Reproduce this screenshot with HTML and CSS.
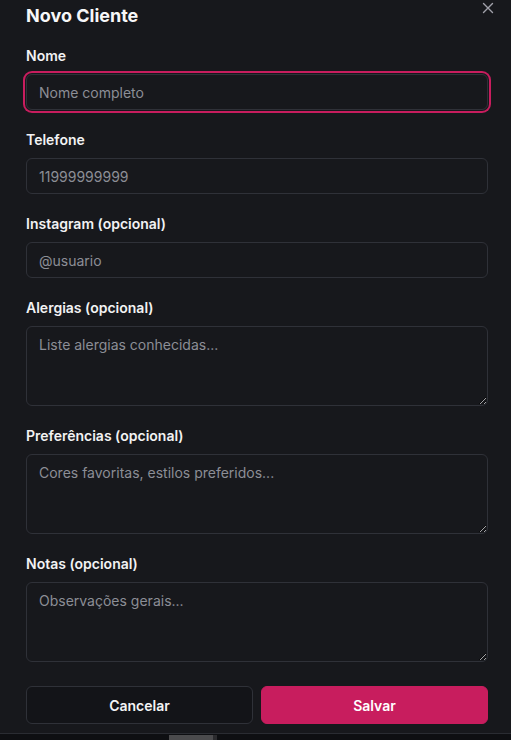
FILE: index.html
```html
<!DOCTYPE html>
<html lang="pt-BR">
<head>
<meta charset="utf-8">
<title>Novo Cliente</title>
<link rel="stylesheet" href="styles.css">
</head>
<body>
<div class="modal">
  <button class="close" aria-label="Fechar">
    <svg width="12" height="12" viewBox="0 0 12 12"><path d="M1.5 1.5 L10.5 10.5 M10.5 1.5 L1.5 10.5" stroke="currentColor" stroke-width="1.4" stroke-linecap="round"/></svg>
  </button>
  <h2 class="title">Novo Cliente</h2>
  <form class="form">
    <div class="field">
      <label class="label">Nome</label>
      <input class="input focused" type="text" placeholder="Nome completo">
    </div>
    <div class="field">
      <label class="label">Telefone</label>
      <input class="input" type="text" placeholder="11999999999">
    </div>
    <div class="field">
      <label class="label">Instagram (opcional)</label>
      <input class="input" type="text" placeholder="@usuario">
    </div>
    <div class="field">
      <label class="label">Alergias (opcional)</label>
      <textarea class="input area" placeholder="Liste alergias conhecidas..."></textarea>
    </div>
    <div class="field">
      <label class="label">Preferências (opcional)</label>
      <textarea class="input area" placeholder="Cores favoritas, estilos preferidos..."></textarea>
    </div>
    <div class="field">
      <label class="label">Notas (opcional)</label>
      <textarea class="input area" placeholder="Observações gerais..."></textarea>
    </div>
    <div class="actions">
      <button type="button" class="btn btn-outline">Cancelar</button>
      <button type="button" class="btn btn-primary">Salvar</button>
    </div>
  </form>
</div>
<div class="under">
  <div class="under-block"></div>
  <div class="under-edge"></div>
</div>
</body>
</html>
```
FILE: styles.css
```css
* { box-sizing: border-box; }
html, body { margin: 0; padding: 0; }
body {
  background: #0e0f12;
  font-family: Inter, "Noto Sans", sans-serif;
  color: #f4f4f5;
  width: 511px;
  height: 740px;
  overflow: hidden;
}
.modal {
  position: relative;
  height: 734px;
  background: #17181c;
  border-bottom: 1px solid #2a2c32;
  padding: 2px 23px 0 26px;
}
.close {
  position: absolute;
  top: 2px;
  right: 17px;
  width: 12px;
  height: 12px;
  padding: 0;
  border: 0;
  background: none;
  color: #a1a1aa;
  display: flex;
}
.title {
  margin: 0;
  font-size: 18px;
  line-height: 28px;
  font-weight: 700;
  letter-spacing: 0;
  color: #f7f7f8;
}
.form {
  margin-top: 16px;
  display: flex;
  flex-direction: column;
  gap: 20px;
}
.field {
  display: flex;
  flex-direction: column;
  gap: 9px;
}
.label {
  font-size: 14px;
  line-height: 19px;
  font-weight: 600;
  color: #f2f2f3;
}
.input {
  display: block;
  width: 100%;
  height: 36px;
  padding: 0 12px;
  background: #17181c;
  border: 1px solid #2f3138;
  border-radius: 6px;
  font-family: Inter, "Noto Sans", sans-serif;
  font-size: 14px;
  color: #f4f4f5;
  outline: none;
}
.input::placeholder { color: #8c8e96; }
.focused {
  box-shadow: 0 0 0 1px #17181c, 0 0 0 3px #c81d5e;
}
.area {
  height: 80px;
  padding: 8px 12px;
  line-height: 20px;
  resize: vertical;
  color-scheme: dark;
}
.actions {
  margin-top: 4px;
  display: flex;
  gap: 8px;
}
.btn {
  flex: 1;
  height: 38px;
  border-radius: 6px;
  font-family: Inter, "Noto Sans", sans-serif;
  font-size: 14px;
  font-weight: 600;
  color: #f4f4f5;
}
.btn-outline {
  background: #131418;
  border: 1px solid #2f3138;
}
.btn-primary {
  background: #c81d5e;
  border: 1px solid #c81d5e;
  color: #fff;
}
.under {
  display: flex;
  height: 5px;
  margin-top: 1px;
}
.under-block {
  margin-left: 169px;
  width: 44px;
  background: #4b4b4d;
}
.under-edge {
  width: 4px;
  background: #2b2b2e;
}
```
